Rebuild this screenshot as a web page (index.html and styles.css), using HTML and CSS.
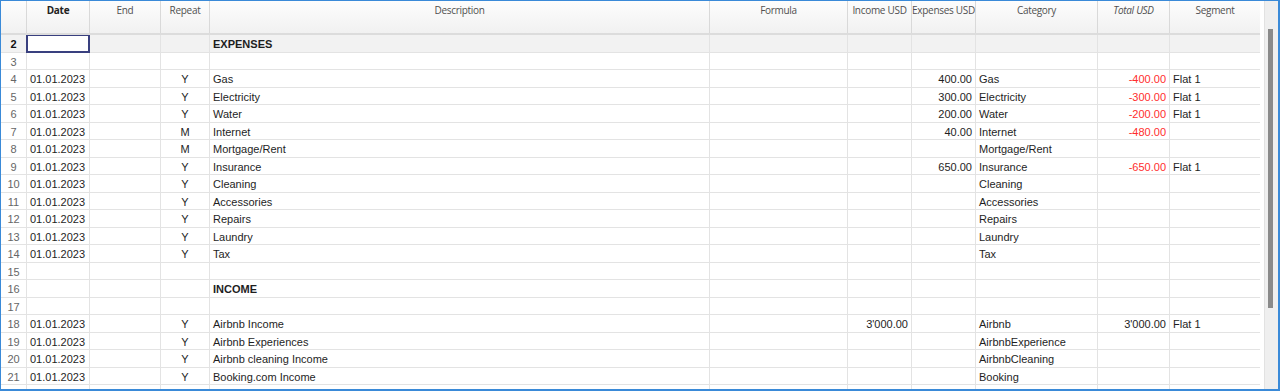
FILE: index.html
```html
<!DOCTYPE html>
<html lang="en">
<head>
  <meta charset="UTF-8" />
  <meta name="viewport" content="width=device-width, initial-scale=1.0" />
  <title>Recurring Budget</title>
  <link rel="stylesheet" href="styles.css">
</head>
<body>
  <div class="window">
    <div class="sheet">
      <div class="row head">
        <div class="c"></div>
        <div class="c b">Date</div>
        <div class="c">End</div>
        <div class="c">Repeat</div>
        <div class="c">Description</div>
        <div class="c">Formula</div>
        <div class="c">Income USD</div>
        <div class="c">Expenses USD</div>
        <div class="c">Category</div>
        <div class="c i">Total USD</div>
        <div class="c">Segment</div>
      </div>

      <div class="row current">
        <div class="c n">2</div><div class="c sel"></div><div class="c"></div><div class="c"></div>
        <div class="c b">EXPENSES</div><div class="c"></div><div class="c"></div><div class="c"></div>
        <div class="c"></div><div class="c"></div><div class="c"></div>
      </div>
      <div class="row">
        <div class="c n">3</div><div class="c"></div><div class="c"></div><div class="c"></div>
        <div class="c"></div><div class="c"></div><div class="c"></div><div class="c"></div>
        <div class="c"></div><div class="c"></div><div class="c"></div>
      </div>
      <div class="row">
        <div class="c n">4</div><div class="c">01.01.2023</div><div class="c"></div><div class="c ctr">Y</div>
        <div class="c">Gas</div><div class="c"></div><div class="c num"></div><div class="c num">400.00</div>
        <div class="c">Gas</div><div class="c num neg">-400.00</div><div class="c">Flat 1</div>
      </div>
      <div class="row">
        <div class="c n">5</div><div class="c">01.01.2023</div><div class="c"></div><div class="c ctr">Y</div>
        <div class="c">Electricity</div><div class="c"></div><div class="c num"></div><div class="c num">300.00</div>
        <div class="c">Electricity</div><div class="c num neg">-300.00</div><div class="c">Flat 1</div>
      </div>
      <div class="row">
        <div class="c n">6</div><div class="c">01.01.2023</div><div class="c"></div><div class="c ctr">Y</div>
        <div class="c">Water</div><div class="c"></div><div class="c num"></div><div class="c num">200.00</div>
        <div class="c">Water</div><div class="c num neg">-200.00</div><div class="c">Flat 1</div>
      </div>
      <div class="row">
        <div class="c n">7</div><div class="c">01.01.2023</div><div class="c"></div><div class="c ctr">M</div>
        <div class="c">Internet</div><div class="c"></div><div class="c num"></div><div class="c num">40.00</div>
        <div class="c">Internet</div><div class="c num neg">-480.00</div><div class="c"></div>
      </div>
      <div class="row">
        <div class="c n">8</div><div class="c">01.01.2023</div><div class="c"></div><div class="c ctr">M</div>
        <div class="c">Mortgage/Rent</div><div class="c"></div><div class="c num"></div><div class="c num"></div>
        <div class="c">Mortgage/Rent</div><div class="c num"></div><div class="c"></div>
      </div>
      <div class="row">
        <div class="c n">9</div><div class="c">01.01.2023</div><div class="c"></div><div class="c ctr">Y</div>
        <div class="c">Insurance</div><div class="c"></div><div class="c num"></div><div class="c num">650.00</div>
        <div class="c">Insurance</div><div class="c num neg">-650.00</div><div class="c">Flat 1</div>
      </div>
      <div class="row">
        <div class="c n">10</div><div class="c">01.01.2023</div><div class="c"></div><div class="c ctr">Y</div>
        <div class="c">Cleaning</div><div class="c"></div><div class="c num"></div><div class="c num"></div>
        <div class="c">Cleaning</div><div class="c num"></div><div class="c"></div>
      </div>
      <div class="row">
        <div class="c n">11</div><div class="c">01.01.2023</div><div class="c"></div><div class="c ctr">Y</div>
        <div class="c">Accessories</div><div class="c"></div><div class="c num"></div><div class="c num"></div>
        <div class="c">Accessories</div><div class="c num"></div><div class="c"></div>
      </div>
      <div class="row">
        <div class="c n">12</div><div class="c">01.01.2023</div><div class="c"></div><div class="c ctr">Y</div>
        <div class="c">Repairs</div><div class="c"></div><div class="c num"></div><div class="c num"></div>
        <div class="c">Repairs</div><div class="c num"></div><div class="c"></div>
      </div>
      <div class="row">
        <div class="c n">13</div><div class="c">01.01.2023</div><div class="c"></div><div class="c ctr">Y</div>
        <div class="c">Laundry</div><div class="c"></div><div class="c num"></div><div class="c num"></div>
        <div class="c">Laundry</div><div class="c num"></div><div class="c"></div>
      </div>
      <div class="row">
        <div class="c n">14</div><div class="c">01.01.2023</div><div class="c"></div><div class="c ctr">Y</div>
        <div class="c">Tax</div><div class="c"></div><div class="c num"></div><div class="c num"></div>
        <div class="c">Tax</div><div class="c num"></div><div class="c"></div>
      </div>
      <div class="row">
        <div class="c n">15</div><div class="c"></div><div class="c"></div><div class="c"></div>
        <div class="c"></div><div class="c"></div><div class="c"></div><div class="c"></div>
        <div class="c"></div><div class="c"></div><div class="c"></div>
      </div>
      <div class="row">
        <div class="c n">16</div><div class="c"></div><div class="c"></div><div class="c"></div>
        <div class="c b">INCOME</div><div class="c"></div><div class="c"></div><div class="c"></div>
        <div class="c"></div><div class="c"></div><div class="c"></div>
      </div>
      <div class="row">
        <div class="c n">17</div><div class="c"></div><div class="c"></div><div class="c"></div>
        <div class="c"></div><div class="c"></div><div class="c"></div><div class="c"></div>
        <div class="c"></div><div class="c"></div><div class="c"></div>
      </div>
      <div class="row">
        <div class="c n">18</div><div class="c">01.01.2023</div><div class="c"></div><div class="c ctr">Y</div>
        <div class="c">Airbnb Income</div><div class="c"></div><div class="c num">3'000.00</div><div class="c num"></div>
        <div class="c">Airbnb</div><div class="c num">3'000.00</div><div class="c">Flat 1</div>
      </div>
      <div class="row">
        <div class="c n">19</div><div class="c">01.01.2023</div><div class="c"></div><div class="c ctr">Y</div>
        <div class="c">Airbnb Experiences</div><div class="c"></div><div class="c num"></div><div class="c num"></div>
        <div class="c">AirbnbExperience</div><div class="c num"></div><div class="c"></div>
      </div>
      <div class="row">
        <div class="c n">20</div><div class="c">01.01.2023</div><div class="c"></div><div class="c ctr">Y</div>
        <div class="c">Airbnb cleaning Income</div><div class="c"></div><div class="c num"></div><div class="c num"></div>
        <div class="c">AirbnbCleaning</div><div class="c num"></div><div class="c"></div>
      </div>
      <div class="row">
        <div class="c n">21</div><div class="c">01.01.2023</div><div class="c"></div><div class="c ctr">Y</div>
        <div class="c">Booking.com Income</div><div class="c"></div><div class="c num"></div><div class="c num"></div>
        <div class="c">Booking</div><div class="c num"></div><div class="c"></div>
      </div>
      <div class="row">
        <div class="c n">22</div><div class="c">01.01.2023</div><div class="c"></div><div class="c ctr">Y</div>
        <div class="c">Booking.com cleaning Income</div><div class="c"></div><div class="c num"></div><div class="c num"></div>
        <div class="c">BookingCleaning</div><div class="c num"></div><div class="c"></div>
      </div>
    </div>

    <div class="scrollbar">
      <div class="thumb"></div>
    </div>
  </div>
</body>
</html>
```

FILE: styles.css
```css
html, body {
  margin: 0;
  padding: 0;
  background: #fff;
  overflow: hidden;
}

.window {
  display: flex;
  height: 391px;
  box-sizing: border-box;
  border: 1px solid #3a8ad8;
  border-right-width: 2px;
  border-bottom-width: 2px;
  overflow: hidden;
}

.sheet {
  flex: 1;
  overflow: hidden;
  font-family: 'Liberation Sans', Arial, sans-serif;
  font-size: 11px;
  color: #1e1e1e;
}

.row {
  display: grid;
  grid-template-columns: 26px 63px 71px 49px 500px 138px 64px 64px 122px 72px 91px;
  height: 17.5px;
  line-height: 18px;
}

.c {
  box-sizing: border-box;
  border-right: 1px solid #e3e3e3;
  border-bottom: 1px solid #e3e3e3;
  padding: 0 3px;
  white-space: nowrap;
  overflow: hidden;
}

.c.n {
  text-align: center;
  color: #666;
  padding: 0;
}

.num { text-align: right; }
.ctr { text-align: center; }
.neg { color: #ff2d2d; }
.b { font-weight: bold; }
.i { font-style: italic; }

.row.head {
  height: 34px;
  line-height: 19px;
  background: linear-gradient(#fdfdfd, #f1f1f1);
  font-family: 'Open Sans', 'Noto Sans', sans-serif;
  font-size: 10px;
  letter-spacing: -0.3px;
  color: #505050;
  border-bottom: 2px solid #dcdcdc;
  box-sizing: border-box;
}

.row.head .c {
  text-align: center;
  border-bottom: none;
  border-right-color: #d9d9d9;
  padding: 0;
  overflow: visible;
}

.row.head .c.b {
  color: #222;
}

.row.current {
  background: #f2f2f2;
}

.row.current .c.n {
  color: #111;
  font-weight: bold;
}

.c.sel {
  background: #fff;
  box-shadow: inset 0 0 0 1px #39407f, -1px 0 0 #39407f;
  border-color: #39407f;
}

.scrollbar {
  width: 13px;
  background: #efefef;
  border-left: 1px solid #e2e2e2;
  margin-left: 4px;
}

.thumb {
  width: 5px;
  height: 279px;
  margin: 28px 0 0 3px;
  background: #8a8a8a;
}
```
